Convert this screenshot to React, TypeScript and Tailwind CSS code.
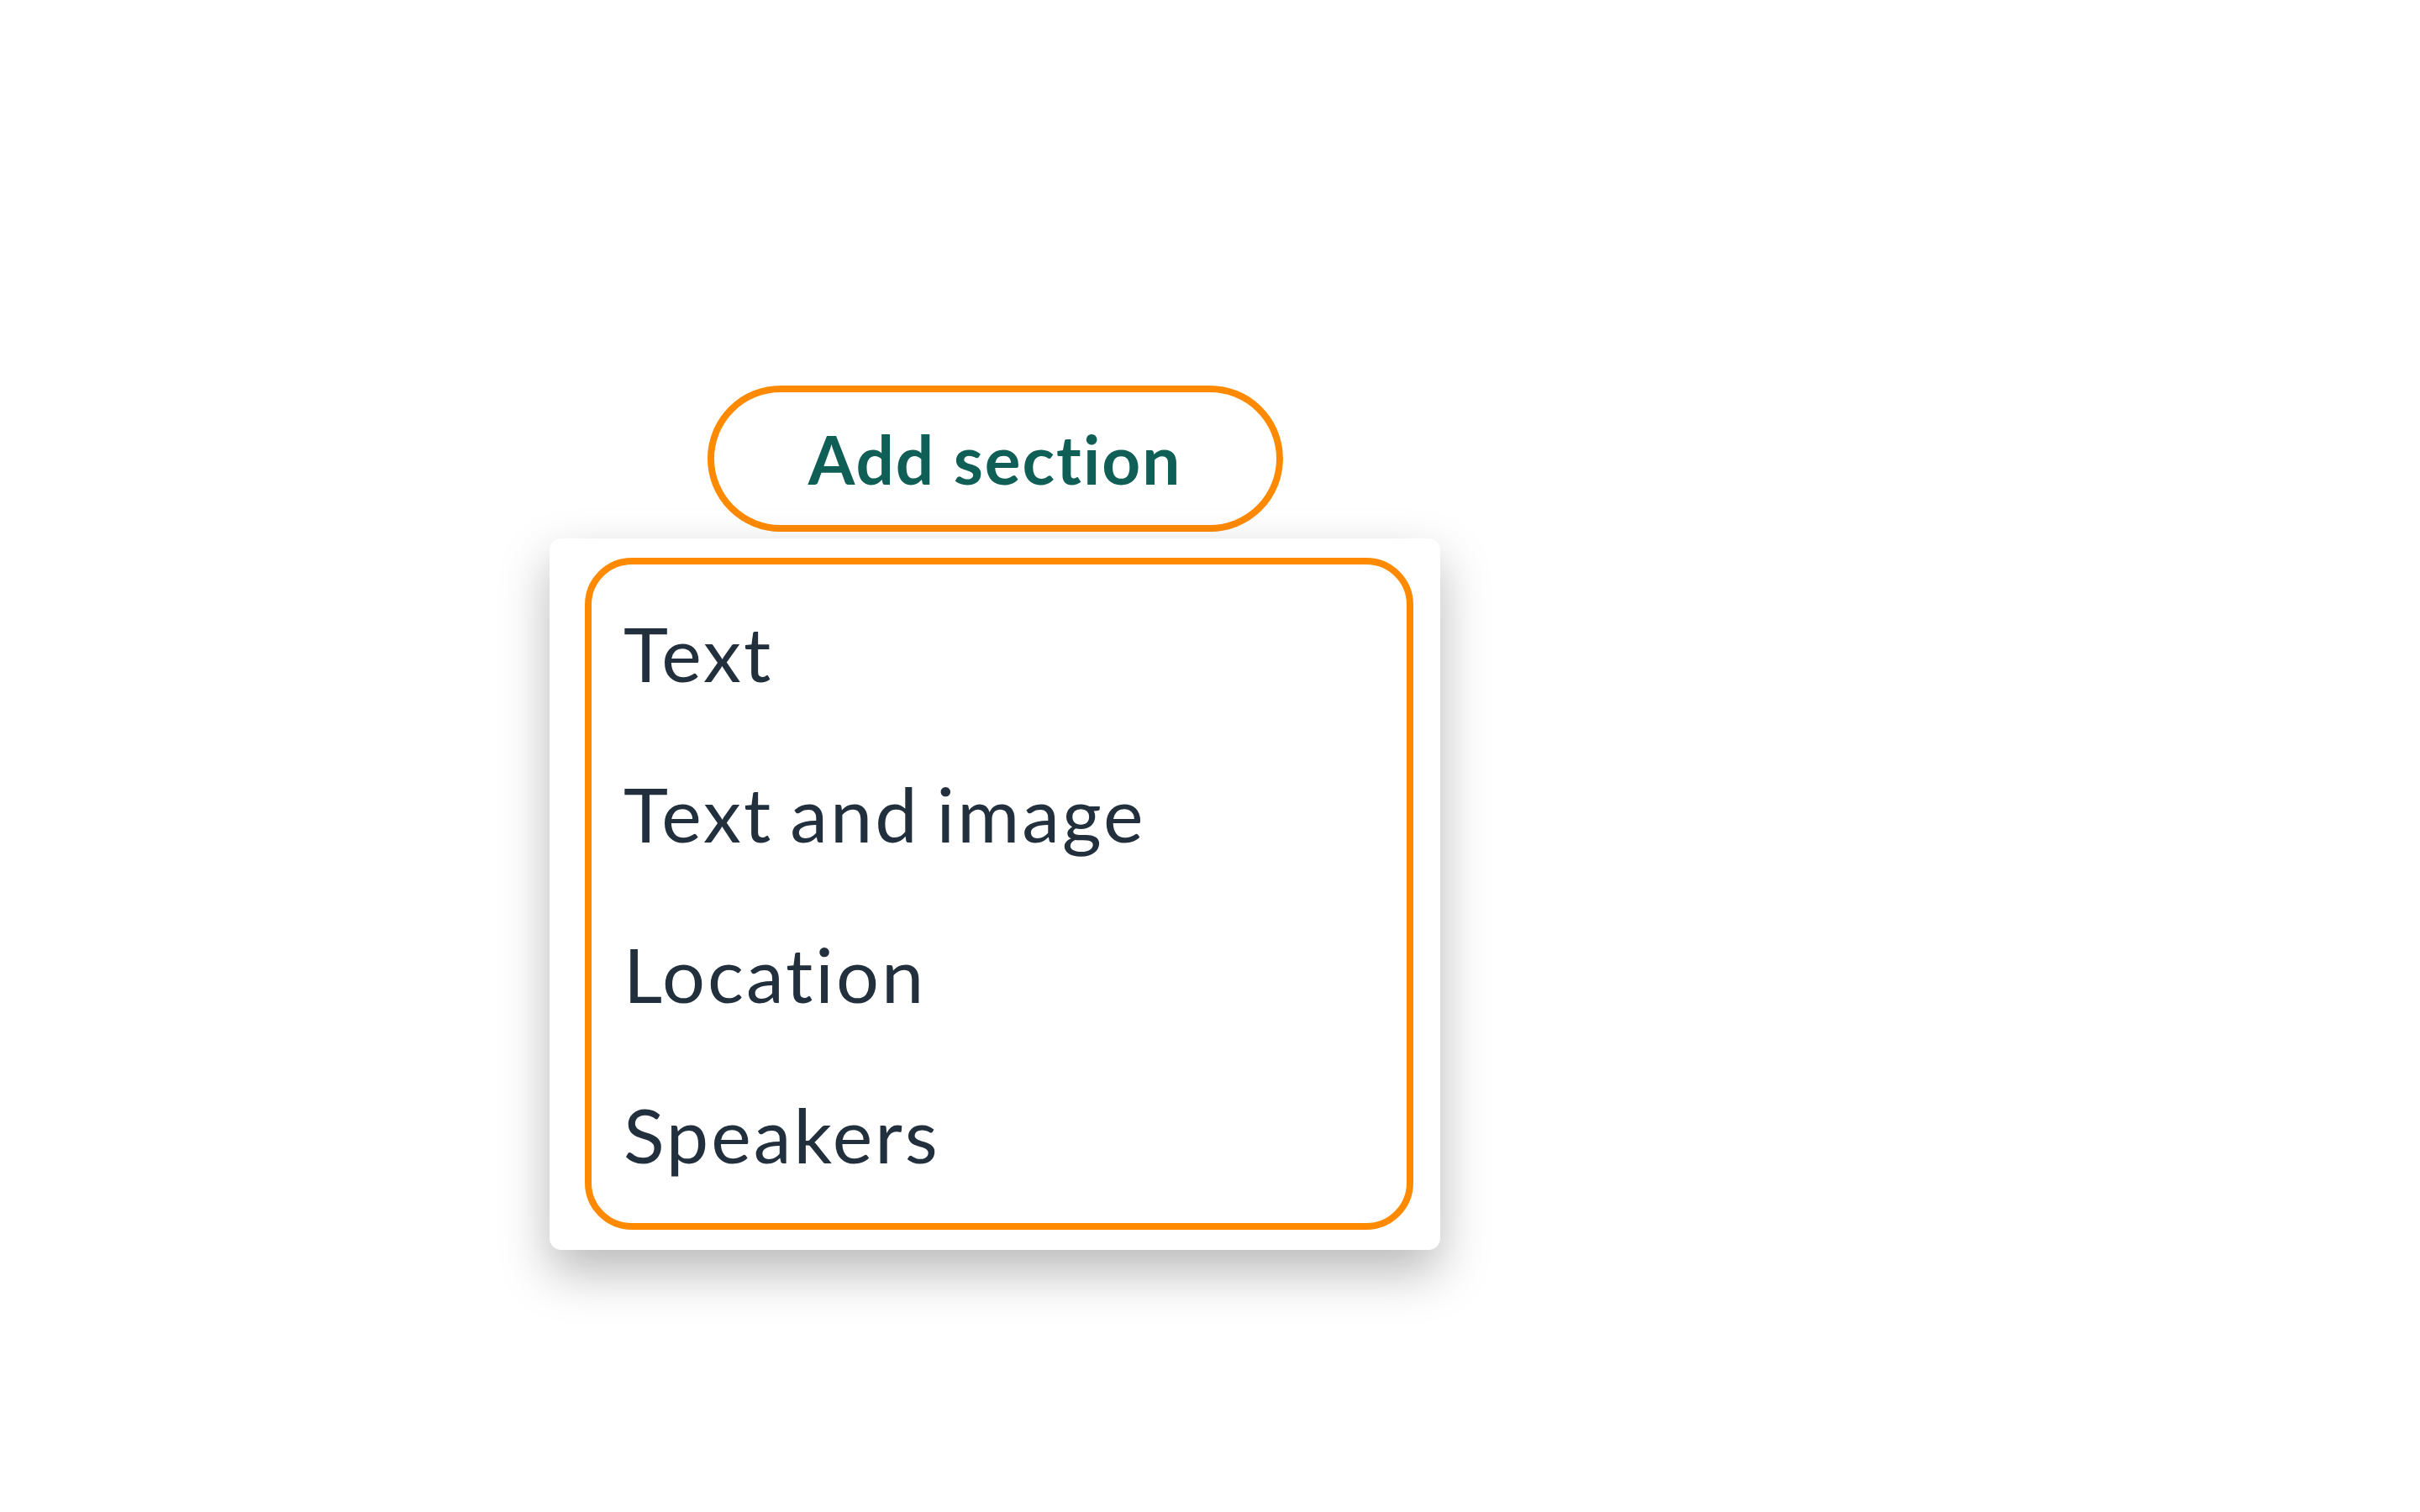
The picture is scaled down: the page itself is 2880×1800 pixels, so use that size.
const sections = ["Text", "Text and image", "Location", "Speakers"];

function AddSectionButton() {
  return (
    <button
      type="button"
      className="flex h-[174px] w-[685px] items-center justify-center rounded-full border-[8px] border-[#ff8a00] bg-transparent text-[80px] font-bold leading-none tracking-[2px] text-[#0f5f57]"
    >
      Add section
    </button>
  );
}

function SectionMenu() {
  return (
    <div className="w-[1060px] rounded-[14px] bg-white pb-[24px] pl-[42px] pr-[32px] pt-[23px] shadow-[0_26px_60px_rgba(0,0,0,0.28)]">
      <ul className="rounded-[56px] border-[8px] border-[#ff8a00] px-[38px] py-[10px]">
        {sections.map((label) => (
          <li key={label} className="text-[90px] leading-[191px] tracking-[3px] text-[#22303d] [word-spacing:-6px]">
            {label}
          </li>
        ))}
      </ul>
    </div>
  );
}

export default function App() {
  return (
    <div className="min-h-screen w-full bg-white pl-[654px] pt-[459px] font-['Lato','Open_Sans',sans-serif] [font-variant-ligatures:none]">
      <div className="flex w-[1060px] flex-col items-center gap-[8px]">
        <AddSectionButton />
        <SectionMenu />
      </div>
    </div>
  );
}
